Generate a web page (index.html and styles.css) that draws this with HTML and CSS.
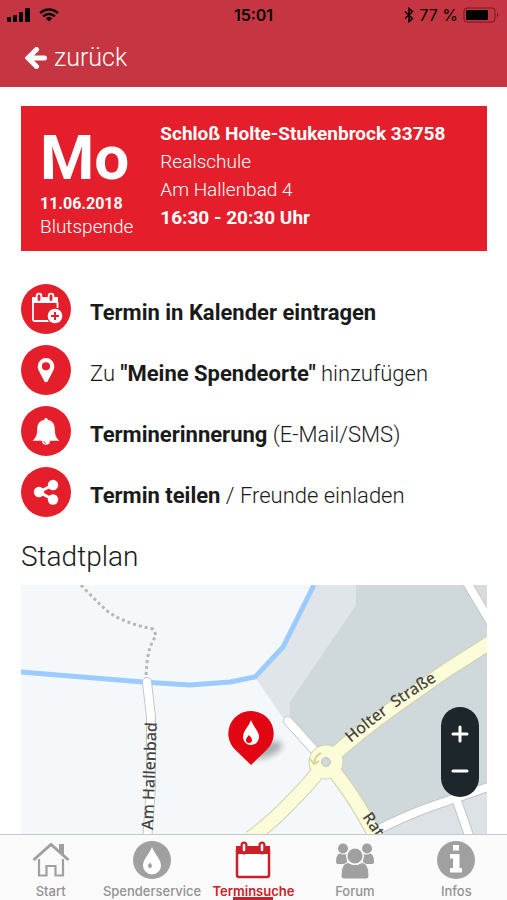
FILE: index.html
```
<!DOCTYPE html>
<html lang="de">

<head>
    <meta charset="UTF-8">
    <meta name="viewport" content="width=device-width, initial-scale=1.0">
    <title>Terminsuche</title>
    <link rel="stylesheet" href="styles.css">
</head>

<body>
    <header class="header">
        <div class="status">
            <div class="status-left">
                <svg width="24" height="14" viewBox="0 0 24 14">
                    <rect x="0" y="9" width="4" height="5" rx="1"/>
                    <rect x="6" y="7" width="4" height="7" rx="1"/>
                    <rect x="12" y="4" width="4" height="10" rx="1"/>
                    <rect x="18" y="0" width="5" height="14" rx="1"/>
                </svg>
                <svg width="20" height="14" viewBox="0 0 20 14">
                    <path d="M1.2 5.2a12.6 12.6 0 0 1 17.6 0M4.2 8.3a8.3 8.3 0 0 1 11.6 0" fill="none" stroke="#000" stroke-width="2.5"/>
                    <path d="M6.7 10.3a4.8 4.8 0 0 1 6.6 0L10 13.6z"/>
                </svg>
            </div>
            <b>15:01</b>
            <div class="status-right">
                <svg width="10" height="16" viewBox="0 0 10 16">
                    <path d="M1 4.5l7.5 7L5 14.6V1.4l3.5 3.1L1 11.5" fill="none" stroke="#000" stroke-width="1.5"/>
                </svg>
                <span>77 %</span>
                <svg width="37" height="16" viewBox="0 0 37 16">
                    <rect x="1" y="1" width="31" height="14" rx="3" fill="none" stroke="#6f1a22"/>
                    <rect x="3" y="3" width="22" height="10" rx="1"/>
                    <path d="M34 5.5q2.500 2.500 0 5z" fill="#6f1a22"/>
                </svg>
            </div>
        </div>
        <a class="back" href="#">
            <svg width="22" height="22" viewBox="0 0 22 22">
                <path d="M11.500 2.500L3 11l8.500 8.500M4 11h15.500" fill="none" stroke="#fff" stroke-width="5" stroke-linecap="round"/>
            </svg>
            <span>zurück</span>
        </a>
    </header>

    <main class="main">
        <section class="card">
            <div class="date">
                <div class="day">Mo</div>
                <b>11.06.2018</b>
                <div class="kind">Blutspende</div>
            </div>
            <div class="place">
                <b>Schloß Holte-Stukenbrock 33758</b>
                <div>Realschule</div>
                <div>Am Hallenbad 4</div>
                <b>16:30 - 20:30 Uhr</b>
            </div>
        </section>

        <div class="actions">
            <button class="action">
                <svg class="circle" viewBox="0 0 50 50">
                    <path d="M12 18v17.500q0 1.500 1.500 1.500H29M36.500 18v8" fill="none" stroke="#fff" stroke-width="1.800"/>
                    <path d="M11 13h26v6H11z" fill="#fff"/>
                    <path d="M18 12v3.500M30 12v3.500" stroke="#fff" stroke-width="6.500" stroke-linecap="round"/>
                    <path d="M18 12v3.500M30 12v3.500" stroke="#e41f2b" stroke-width="2.800" stroke-linecap="round"/>
                    <circle cx="34" cy="32" r="8.500" fill="#e41f2b"/>
                    <circle cx="34" cy="32" r="7.300" fill="#fff"/>
                    <path d="M34 28v8M30 32h8" stroke="#e41f2b" stroke-width="2"/>
                </svg>
                <span class="label"><b>Termin in Kalender eintragen</b></span>
            </button>
            <button class="action">
                <svg class="circle" viewBox="0 0 50 50">
                    <path fill="#fff" fill-rule="evenodd" d="M25 13a8.300 8.300 0 0 0-8.300 8.300c0 2 .6 3.500 1.500 5.200l5.100 9.800c.8 1.300 2.600 1.300 3.400 0l5.100-9.800c.9-1.700 1.500-3.200 1.500-5.200A8.300 8.300 0 0 0 25 13zm0 4.200a4.100 4.100 0 1 1 0 8.200 4.100 4.100 0 0 1 0-8.200z"/>
                </svg>
                <span class="label">Zu <b>"Meine Spendeorte"</b> hinzufügen</span>
            </button>
            <button class="action">
                <svg class="circle" viewBox="0 0 50 50">
                    <path fill="#fff" d="M25 12c-1 0-1.600.7-1.600 1.700-4.600.8-7.200 4.400-7.200 9 0 6.500-1.500 9.500-4.700 12h9.500a4 4 0 0 0 8 0h9.500c-3.200-2.500-4.700-5.500-4.700-12 0-4.600-2.600-8.200-7.200-9 0-1-.6-1.700-1.600-1.700z"/>
                    <path d="M22.700 35.200q.3 2 2.300 2.200" fill="none" stroke="#e41f2b" stroke-width=".8"/>
                </svg>
                <span class="label"><b>Terminerinnerung</b> (E-Mail/SMS)</span>
            </button>
            <button class="action">
                <svg class="circle" viewBox="0 0 50 50">
                    <path d="M32 18l-14 7 14 7.500" fill="none" stroke="#fff" stroke-width="3"/>
                    <circle cx="32" cy="18" r="5.200" fill="#fff"/>
                    <circle cx="18" cy="25" r="5.200" fill="#fff"/>
                    <circle cx="32" cy="32.500" r="5.200" fill="#fff"/>
                </svg>
                <span class="label"><b>Termin teilen</b> / Freunde einladen</span>
            </button>
        </div>

        <h2>Stadtplan</h2>
        <div class="map">
            <svg class="streets" viewBox="0 0 466 249" preserveAspectRatio="xMidYMin slice">
                <rect width="466" height="249" fill="#f4f8fb"/>
                <!-- built-up areas -->
                <path d="M293 0h45v22l-66 98v22l-10-9-28-41 28-30z" fill="#dfe5e8"/>
                <path d="M335 0h131v249H354l-49-72-36-41v-19l66-97z" fill="#cfd9db"/>
                <path d="M446 0h20v34z" fill="#d6dcde"/>
                <path d="M354 249l52-26 60-21v47z" fill="#dce2e5"/>
                <!-- river and footpath -->
                <path d="M0 87l122 10 47 3 40-3 25-5 28-30 31-62" fill="none" stroke="#9bcbff" stroke-width="5"/>
                <path d="M60 0q12 13 24 24 8 7 18 11 14 6 30 9l3 6-6 12q-4 15-4 33" fill="none" stroke="#b4b8bb" stroke-width="3" stroke-dasharray="3 3"/>
                <!-- side streets, outline first -->
                <g fill="none" stroke="#c3c7c9" stroke-linecap="round" stroke-width="10">
                    <path d="M126 97l4 35v70l-4 54"/>
                    <path d="M267 136l28 31M445-4l28 47M352 247q30-15 54-24l64-22M436 216l14 40"/>
                </g>
                <g fill="none" stroke="#fff" stroke-linecap="round" stroke-width="8">
                    <path d="M126 97l4 35v70l-4 54"/>
                    <path d="M267 136l28 31M445-4l28 47M352 247q30-15 54-24l64-22M436 216l14 40"/>
                </g>
                <!-- main roads -->
                <g fill="none" stroke="#cfcfb2" stroke-width="15">
                    <path d="M305 177q28-26 71-57l50-35 44-28M305 177q-15 20-34 39-22 23-42 37M305 177q27 30 52 79"/>
                    <circle cx="305" cy="177" r="10"/>
                </g>
                <g fill="none" stroke="#fdfcd8" stroke-width="13">
                    <path d="M305 177q28-26 71-57l50-35 44-28M305 177q-15 20-34 39-22 23-42 37M305 177q27 30 52 79"/>
                    <circle cx="305" cy="177" r="10"/>
                </g>
                <circle cx="305" cy="177" r="4.500" fill="#cfd9db" stroke="#c3c3b4"/>
                <path d="M300 168q-6 3-7 10M289 174l4 5 5-3" fill="none" stroke="#d9d49a" stroke-width="2"/>
                <!-- street names -->
                <path id="holter" d="M330 158q21-18 47-37 20-14 60-38" fill="none"/>
                <text class="street" transform="translate(132 245) rotate(-88)">Am Hallenbad</text>
                <text class="street"><textPath href="#holter">Holter&#160; Straße</textPath></text>
                <text class="street" transform="translate(341 232) rotate(56)">Rat</text>
                <!-- marker -->
                <ellipse class="shadow" cx="245" cy="165" rx="17" ry="7" transform="rotate(-20 245 165)"/>
                <path d="M230 126a22.500 22.500 0 0 1 16 38.500L230 180l-16-15.500A22.500 22.500 0 0 1 230 126z" fill="#e20613"/>
                <path d="M230 135c3 8 8 11 8 17a8 8 0 0 1-16 0c0-6 5-9 8-17z" fill="#fff"/>
                <path d="M228 150q3 3 3 5a3 3 0 0 1-6 0q0-2 3-5z" fill="#e20613"/>
            </svg>
            <div class="zoom">
                <button aria-label="Vergrößern">
                    <svg width="18" height="18" viewBox="0 0 18 18"><path d="M9 2v14M2 9h14" stroke="#fff" stroke-width="3" stroke-linecap="round"/></svg>
                </button>
                <button aria-label="Verkleinern">
                    <svg width="18" height="18" viewBox="0 0 18 18"><path d="M2 9h14" stroke="#fff" stroke-width="3" stroke-linecap="round"/></svg>
                </button>
            </div>
        </div>
    </main>

    <nav class="tabs">
        <a href="#">
            <svg viewBox="0 0 40 40" fill="none" stroke="#a0a0a0">
                <path d="M2.500 20L20 4.500 37.500 20" stroke-width="3"/>
                <path d="M28 4h5v11l-5-4.500z" fill="#a0a0a0" stroke="none"/>
                <path d="M8 19v16.500h7.500V26h9v9.500H32V19" stroke-width="2.200"/>
            </svg>
            <span>Start</span>
        </a>
        <a href="#">
            <svg viewBox="0 0 40 40">
                <circle cx="20" cy="20" r="19" fill="#a0a0a0"/>
                <path d="M20 7c3 8 9 12 9 18.500a9 9 0 0 1-18 0C11 19 17 15 20 7z" fill="#fff"/>
                <path d="M18 22.500q2 2 2 3.500a2 2 0 0 1-4 0q0-1.500 2-3.500z" fill="#a0a0a0"/>
            </svg>
            <span>Spenderservice</span>
        </a>
        <a class="active" href="#">
            <svg viewBox="0 0 40 40">
                <path d="M4 9v26q0 2 2 2h28q2 0 2-2V9" fill="#fff" stroke="#cb2027" stroke-width="2.500"/>
                <path d="M3 6h34v8H3z" fill="#cb2027"/>
                <path d="M11 5v6M29 5v6" stroke="#cb2027" stroke-width="7" stroke-linecap="round"/>
                <path d="M11 5v5M29 5v5" stroke="#fff" stroke-width="2.500" stroke-linecap="round"/>
            </svg>
            <span>Terminsuche</span>
        </a>
        <a href="#">
            <svg viewBox="0 0 40 40" fill="#a0a0a0">
                <circle cx="8" cy="8.500" r="5"/>
                <circle cx="32" cy="8.500" r="5"/>
                <path d="M1 22q0-8 4-8.500 3 2 7 .2V24H4q-3 0-3-2zM39 22q0-8-4-8.500-3 2-7 .2V24h8q3 0 3-2z"/>
                <path d="M6 36q0-13 7-13.500 7 4 14 0 7 .5 7 13.500 0 3-3 3H9q-3 0-3-3z" stroke="#fafafa" stroke-width="1"/>
                <circle cx="20" cy="16" r="8.300" stroke="#fafafa" stroke-width="1.500"/>
            </svg>
            <span>Forum</span>
        </a>
        <a href="#">
            <svg viewBox="0 0 40 40">
                <circle cx="20" cy="20" r="19" fill="#a0a0a0"/>
                <path d="M17 5h6v5.500h-6zM14 14h9.500v14H26v4.500H14V28h3v-9.500h-3z" fill="#fff"/>
            </svg>
            <span>Infos</span>
        </a>
    </nav>
</body>

</html>
```
FILE: styles.css
```
* {
    box-sizing: border-box;
}

body {
    margin: 0;
    height: 100vh;
    display: flex;
    flex-direction: column;
    font-family: Roboto, sans-serif;
    font-weight: 300;
    color: #1a1a1a;
    background: #fff;
}

button {
    margin: 0;
    padding: 0;
    border: 0;
    background: none;
    font: inherit;
    color: inherit;
    cursor: pointer;
}

a {
    text-decoration: none;
}

b {
    font-weight: 700;
}

.header {
    padding-bottom: 14px;
    background: #c63642;
}

.status {
    display: grid;
    grid-template-columns: 1fr auto 1fr;
    align-items: center;
    height: 30px;
    padding: 0 7px;
    font: 400 16px Inter, sans-serif;
    color: #000;
}

.status b {
    font-weight: 600;
}

.status-left,
.status-right {
    display: flex;
    align-items: center;
    gap: 8px;
}

.status-right {
    justify-content: flex-end;
    gap: 5px;
}

.back {
    display: flex;
    align-items: center;
    gap: 7px;
    margin-top: 13px;
    padding-left: 25px;
    font-size: 25px;
    line-height: 30px;
    color: #fff;
}

.main {
    flex: 1;
    min-height: 0;
    display: flex;
    flex-direction: column;
    padding: 19px 20px 0 21px;
}

.card {
    display: flex;
    flex-shrink: 0;
    gap: 27px;
    padding: 14px 19px 13px;
    font-size: 19px;
    line-height: 28px;
    color: #fff;
    background: #e41f2b;
}

.date {
    line-height: 23px;
}

.date b {
    display: block;
    font-size: 16px;
}

.day {
    margin: 6px 0 2px;
    font-size: 62px;
    font-weight: 700;
    line-height: 64px;
}

.place b {
    display: block;
}

.actions {
    display: flex;
    flex-direction: column;
    gap: 11px;
    margin-top: 33px;
}

.action {
    display: flex;
    align-items: center;
    gap: 19px;
    font-size: 22px;
    text-align: left;
}

.circle {
    flex: none;
    width: 50px;
    height: 50px;
    border-radius: 50%;
    background: #e41f2b;
}

.label {
    padding-top: 6px;
}

h2 {
    margin: 22px 0 10px;
    font-size: 28px;
    font-weight: 300;
    line-height: 36px;
}

.map {
    position: relative;
    flex: 1;
    min-height: 0;
    overflow: hidden;
}

.streets {
    display: block;
    width: 100%;
    height: 100%;
}

.street {
    font: 500 16px "Noto Sans", sans-serif;
    fill: #444;
}

.shadow {
    fill: #000;
    opacity: 0.3;
    filter: blur(3px);
}

.zoom {
    position: absolute;
    top: 122px;
    right: 8px;
    display: flex;
    flex-direction: column;
    padding: 8px 0;
    border-radius: 19px;
    background: #1d272b;
}

.zoom button {
    display: flex;
    align-items: center;
    justify-content: center;
    width: 38px;
    height: 37px;
}

.tabs {
    display: grid;
    grid-template-columns: repeat(5, 1fr);
    height: 66px;
    border-top: 1px solid #c8c8c8;
    background: #fafafa;
    font: 500 13px Inter, sans-serif;
}

.tabs a {
    display: flex;
    flex-direction: column;
    align-items: center;
    gap: 2px;
    padding-top: 5px;
    line-height: 18px;
    color: #929292;
}

.tabs svg {
    width: 40px;
    height: 40px;
    flex: none;
}

.tabs .active {
    font-weight: 600;
    color: #cb2027;
    background: linear-gradient(#cb2027, #cb2027) bottom / 40px 3px no-repeat;
}
```
